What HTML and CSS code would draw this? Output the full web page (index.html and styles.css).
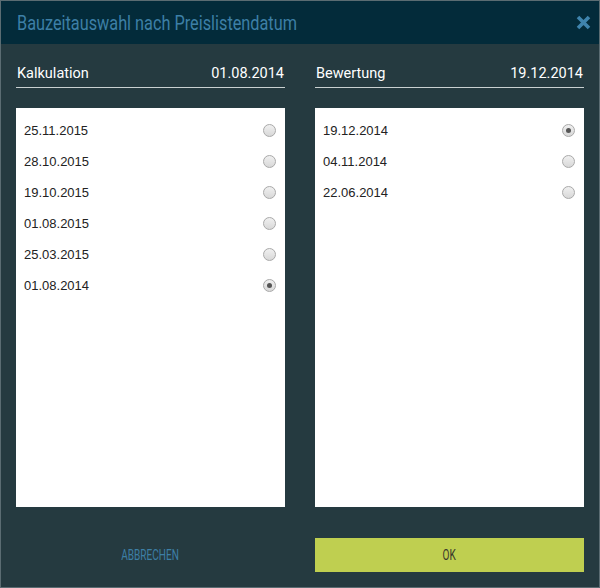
FILE: index.html
```html
<!DOCTYPE html>
<html lang="de">

<head>
    <meta charset="UTF-8">
    <title>Bauzeitauswahl nach Preislistendatum</title>
    <link rel="stylesheet" href="styles.css">
</head>

<body>
    <div class="dialog">
        <div class="dialog-header">
            <h1>Bauzeitauswahl nach Preislistendatum</h1>
            <button class="close-btn" aria-label="Schließen">
                <svg width="15" height="15" viewBox="0 0 15 15">
                    <path d="M2 2 L13 13 M13 2 L2 13" stroke="#3f84ad" stroke-width="3.6" stroke-linecap="butt" />
                </svg>
            </button>
        </div>
        <div class="dialog-body">
            <div class="column">
                <div class="column-head">
                    <span>Kalkulation</span>
                    <span>01.08.2014</span>
                </div>
                <ul class="date-list">
                    <li><span>25.11.2015</span><span class="radio"></span></li>
                    <li><span>28.10.2015</span><span class="radio"></span></li>
                    <li><span>19.10.2015</span><span class="radio"></span></li>
                    <li><span>01.08.2015</span><span class="radio"></span></li>
                    <li><span>25.03.2015</span><span class="radio"></span></li>
                    <li><span>01.08.2014</span><span class="radio checked"></span></li>
                </ul>
                <div class="actions">
                    <button class="btn-cancel"><span>ABBRECHEN</span></button>
                </div>
            </div>
            <div class="column">
                <div class="column-head">
                    <span>Bewertung</span>
                    <span>19.12.2014</span>
                </div>
                <ul class="date-list">
                    <li><span>19.12.2014</span><span class="radio checked"></span></li>
                    <li><span>04.11.2014</span><span class="radio"></span></li>
                    <li><span>22.06.2014</span><span class="radio"></span></li>
                </ul>
                <div class="actions">
                    <button class="btn-ok"><span>OK</span></button>
                </div>
            </div>
        </div>
    </div>
</body>

</html>
```

FILE: styles.css
```css
body {
    margin: 0;
    padding: 0;
    font-family: Roboto, "Liberation Sans", sans-serif;
}

.dialog {
    width: 600px;
    height: 588px;
    box-sizing: border-box;
    border: 1px solid #5b6c72;
    background-color: #253a40;
    display: flex;
    flex-direction: column;
}

.dialog-header {
    height: 43px;
    background-color: #032b3a;
    display: flex;
    align-items: center;
    justify-content: space-between;
    padding: 0 8px 0 16px;
}

/* no condensed face installed, so squeeze the text horizontally */
.dialog-header h1 {
    margin: 0;
    font-family: Roboto, sans-serif;
    font-weight: normal;
    font-size: 21px;
    color: #3d7fa6;
    transform: scaleX(0.775);
    transform-origin: left center;
    white-space: nowrap;
}

.close-btn {
    background: none;
    border: none;
    padding: 0;
    width: 16px;
    height: 16px;
    cursor: pointer;
}

.dialog-body {
    flex: 1;
    display: flex;
    gap: 30px;
    padding: 0 15px;
}

.column {
    flex: 1;
    display: flex;
    flex-direction: column;
}

.column-head {
    display: flex;
    justify-content: space-between;
    color: #ffffff;
    font-size: 14.5px;
    padding: 21px 1px 5px 1px;
    border-bottom: 1px solid #c9d0d1;
}

.date-list {
    list-style: none;
    margin: 20px 0 0 0;
    padding: 7px 0 0 0;
    height: 392px;
    background-color: #ffffff;
}

.date-list li {
    height: 31px;
    display: flex;
    align-items: center;
    justify-content: space-between;
    padding: 0 9px 0 8px;
    font-family: "Liberation Sans", Arial, sans-serif;
    font-size: 13px;
    color: #222222;
}

.radio {
    width: 11px;
    height: 11px;
    border: 1px solid #a9a9a9;
    border-radius: 50%;
    background: linear-gradient(#f0f0f0, #d8d8d8);
    display: flex;
    align-items: center;
    justify-content: center;
}

.radio.checked::after {
    content: "";
    width: 5px;
    height: 5px;
    border-radius: 50%;
    background-color: #555555;
}

.actions {
    margin-top: 31px;
    height: 34px;
    display: flex;
}

.actions button {
    flex: 1;
    border: none;
    font-family: Roboto, sans-serif;
    font-size: 14px;
    cursor: pointer;
}

.actions button span {
    display: inline-block;
    transform: scaleX(0.72);
}

.btn-cancel {
    background: none;
    color: #3d7fa6;
}

.btn-ok {
    background-color: #bfcf50;
    color: #3b3a2c;
}
```
